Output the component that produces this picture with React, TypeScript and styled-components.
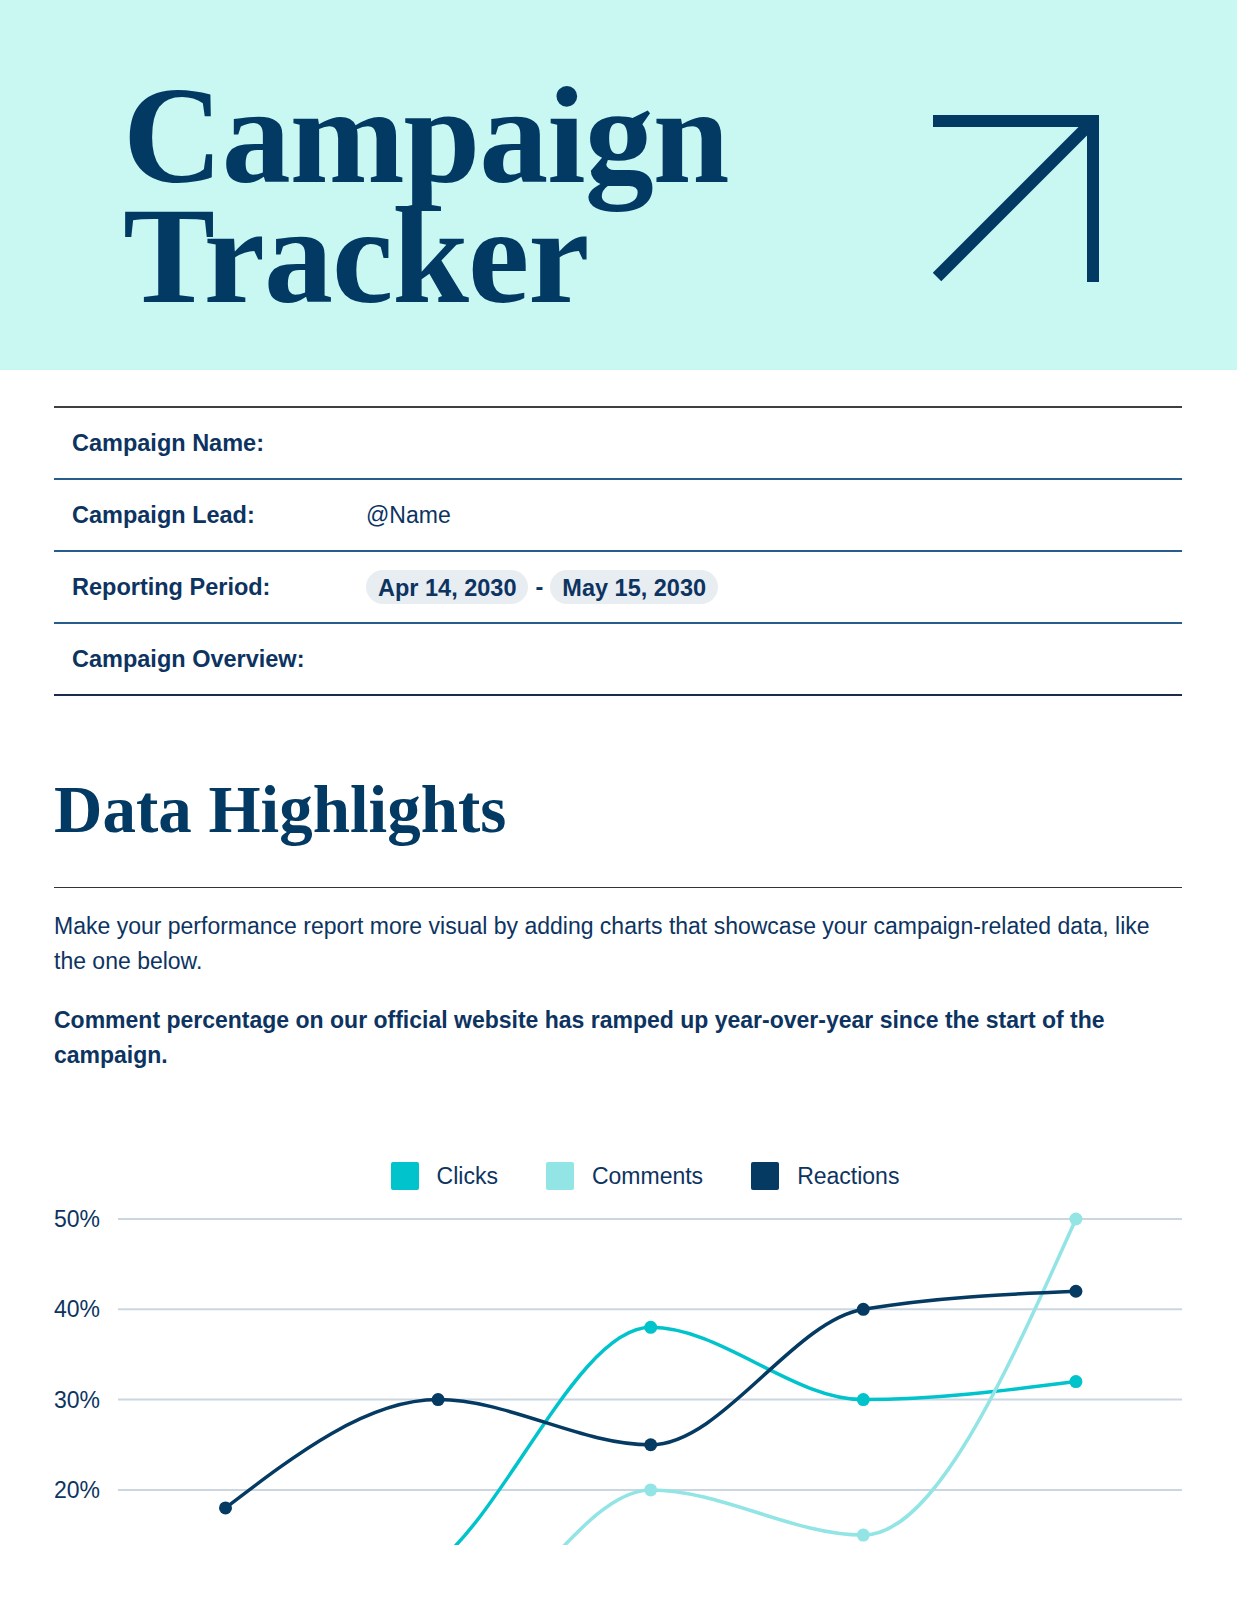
import React from "react"
import styled, { createGlobalStyle } from "styled-components";

const NAVY = "#0d3461";
const INK = "#033a64";

const GlobalStyle = createGlobalStyle`
    body {
        margin: 0;
        background: #ffffff;
        font-family: "Liberation Sans", Arial, sans-serif;
        color: ${NAVY};
    }
`;

const Page = styled.div`
    width: 1237px;
    background: #ffffff;
`;

const Banner = styled.header`
    height: 370px;
    box-sizing: border-box;
    background: #c9f8f3;
    display: flex;
    justify-content: space-between;
    align-items: flex-start;
    padding: 76px 138px 0 123px;
`;

const Title = styled.h1`
    margin: 0;
    font-family: "Liberation Serif", "Times New Roman", serif;
    font-weight: 700;
    font-size: 138px;
    line-height: 120px;
    letter-spacing: -1px;
    color: ${INK};
`;

const ArrowBox = styled.svg`
    display: block;
    margin-top: 39px;
`;

const Content = styled.main`
    padding: 36px 55px 0 54px;
`;

const InfoTable = styled.section`
    border-top: 2px solid #3f3f3f;
`;

const InfoRow = styled.div<{ $last?: boolean }>`
    height: 72px;
    box-sizing: border-box;
    display: grid;
    grid-template-columns: 294px 1fr;
    align-items: center;
    padding-left: 18px;
    border-bottom: 2px solid ${p => p.$last ? "#1c2b4b" : "#275d8c"};
`;

const Label = styled.div`
    font-weight: 700;
    font-size: 23.5px;
    color: ${NAVY};
`;

const Value = styled.div`
    display: flex;
    align-items: center;
    gap: 7px;
    font-size: 23px;
    color: ${NAVY};
`;

const Pill = styled.span`
    display: inline-flex;
    align-items: center;
    height: 34px;
    padding: 2px 12px 0 12px;
    box-sizing: border-box;
    border-radius: 17px;
    background: #e8edf2;
    font-weight: 700;
    font-size: 23.5px;
`;

const Dash = styled.span`
    font-weight: 700;
    font-size: 23.5px;
`;

const SectionTitle = styled.h2`
    margin: 73px 0 0 0;
    font-family: "Liberation Serif", "Times New Roman", serif;
    font-weight: 700;
    font-size: 67px;
    line-height: 80px;
    color: ${INK};
`;

const Rule = styled.hr`
    margin: 38px 0 0 0;
    border: 0;
    border-top: 1.5px solid #343434;
`;

const Text = styled.p<{ $bold?: boolean }>`
    margin: ${p => p.$bold ? "25px" : "21px"} 0 0 0;
    font-size: 23px;
    line-height: 34.5px;
    font-weight: ${p => p.$bold ? 700 : 400};
    color: ${NAVY};
`;

const Chart = styled.section`
    margin-top: 90px;
`;

const Legend = styled.div`
    display: flex;
    justify-content: center;
    gap: 48px;
    padding-left: 54px;
`;

const LegendItem = styled.div`
    display: flex;
    align-items: center;
    gap: 18px;
    font-size: 23px;
    line-height: 28px;
    color: ${NAVY};
`;

const Swatch = styled.span<{ $color: string }>`
    width: 28px;
    height: 28px;
    border-radius: 2px;
    background: ${p => p.$color};
`;

const Plot = styled.svg`
    display: block;
    margin-top: 14px;
    overflow: hidden;
`;

const ArrowMark = () => (
    <ArrowBox width="166" height="167" viewBox="0 0 166 167">
        <g stroke={INK} strokeWidth="12" fill="none" strokeLinecap="butt">
            <line x1="0" y1="6" x2="166" y2="6" />
            <line x1="160" y1="0" x2="160" y2="167" />
            <line x1="158" y1="8" x2="4" y2="162" />
        </g>
    </ArrowBox>
);

type Pt = [number, number];

// monotone-x interpolation, same as d3.curveMonotoneX
const sign = (x: number) => x < 0 ? -1 : 1;

const monotonePath = (pts: Pt[]) => {
    const n = pts.length;
    const t: number[] = new Array(n).fill(0);
    for (let i = 1; i < n - 1; i++) {
        const [x0, y0] = pts[i - 1], [x1, y1] = pts[i], [x2, y2] = pts[i + 1];
        const h0 = x1 - x0, h1 = x2 - x1;
        const s0 = (y1 - y0) / h0, s1 = (y2 - y1) / h1;
        const p = (s0 * h1 + s1 * h0) / (h0 + h1);
        t[i] = (sign(s0) + sign(s1)) * Math.min(Math.abs(s0), Math.abs(s1), 0.5 * Math.abs(p)) || 0;
    }
    const end = (a: Pt, b: Pt, m: number) => (3 * (b[1] - a[1]) / (b[0] - a[0]) - m) / 2;
    t[0] = end(pts[0], pts[1], t[1]);
    t[n - 1] = end(pts[n - 2], pts[n - 1], t[n - 2]);

    let d = `M${pts[0][0]},${pts[0][1]}`;
    for (let i = 0; i < n - 1; i++) {
        const [x0, y0] = pts[i], [x1, y1] = pts[i + 1];
        const dx = (x1 - x0) / 3;
        d += `C${x0 + dx},${y0 + dx * t[i]} ${x1 - dx},${y1 - dx * t[i + 1]} ${x1},${y1}`;
    }
    return d;
};

const PLOT_W = 1128;
const PLOT_H = 341;
const GRID_X = 64;
const xOf = (i: number) => 171.5 + 212.6 * i;
const yOf = (v: number) => 15 + (50 - v) * 9.03;

const series = [
    { name: "Clicks", color: "#00c3cc", values: [0, 12, 38, 30, 32] },
    { name: "Comments", color: "#92e4e5", values: [5, 3, 20, 15, 50] },
    { name: "Reactions", color: "#053a63", values: [18, 30, 25, 40, 42] },
];

const ticks = [50, 40, 30, 20];

const LineChart = () => (
    <Chart>
        <Legend>
            {series.map(s => (
                <LegendItem key={s.name}>
                    <Swatch $color={s.color} />
                    {s.name}
                </LegendItem>
            ))}
        </Legend>
        <Plot width={PLOT_W} height={PLOT_H} viewBox={`0 0 ${PLOT_W} ${PLOT_H}`}>
            {ticks.map(v => (
                <g key={v}>
                    <line x1={GRID_X} x2={PLOT_W} y1={yOf(v)} y2={yOf(v)} stroke="#cbd6e1" strokeWidth="2" />
                    <text x="0" y={yOf(v)} dy="8" fontSize="23" fill={NAVY}
                        fontFamily='"Liberation Sans", Arial, sans-serif'>{v}%</text>
                </g>
            ))}
            {series.map(s => {
                const pts = s.values.map((v, i) => [xOf(i), yOf(v)] as Pt);
                return (
                    <g key={s.name}>
                        <path d={monotonePath(pts)} fill="none" stroke={s.color} strokeWidth="3.5" />
                        {pts.map(([x, y], i) => <circle key={i} cx={x} cy={y} r="6.5" fill={s.color} />)}
                    </g>
                );
            })}
        </Plot>
    </Chart>
);

export default function App() {
    return (
        <Page>
            <GlobalStyle />
            <Banner>
                <Title>Campaign<br />Tracker</Title>
                <ArrowMark />
            </Banner>
            <Content>
                <InfoTable>
                    <InfoRow>
                        <Label>Campaign Name:</Label>
                        <Value />
                    </InfoRow>
                    <InfoRow>
                        <Label>Campaign Lead:</Label>
                        <Value>@Name</Value>
                    </InfoRow>
                    <InfoRow>
                        <Label>Reporting Period:</Label>
                        <Value>
                            <Pill>Apr 14, 2030</Pill>
                            <Dash>-</Dash>
                            <Pill>May 15, 2030</Pill>
                        </Value>
                    </InfoRow>
                    <InfoRow $last>
                        <Label>Campaign Overview:</Label>
                        <Value />
                    </InfoRow>
                </InfoTable>
                <SectionTitle>Data Highlights</SectionTitle>
                <Rule />
                <Text>
                    Make your performance report more visual by adding charts that showcase your campaign-related data, like the one below.
                </Text>
                <Text $bold>
                    Comment percentage on our official website has ramped up year-over-year since the start of the campaign.
                </Text>
                <LineChart />
            </Content>
        </Page>
    );
}
